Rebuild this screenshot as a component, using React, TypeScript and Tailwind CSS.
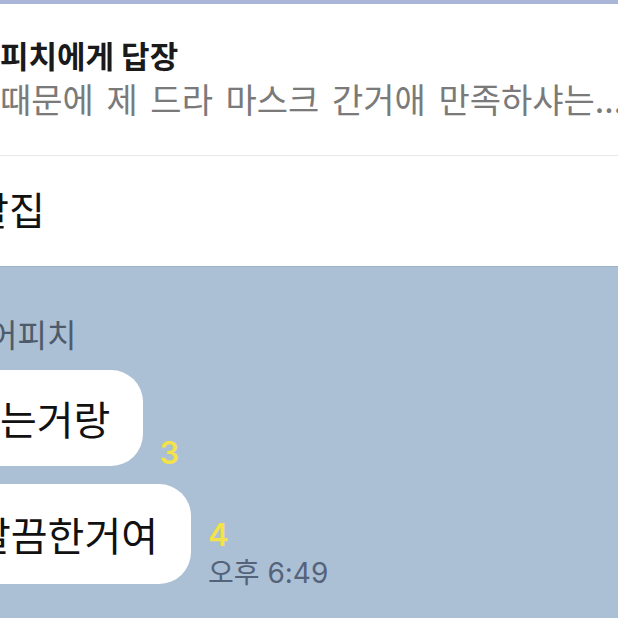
const KR = "font-['Noto_Sans_CJK_KR',sans-serif]";

function ReplyPreview() {
  return (
    <div className="h-[152px] bg-white border-b border-[#e8e8e8] pt-[33px]">
      <div className="text-[31px] leading-[36px] font-bold text-[#1a1a1a] whitespace-nowrap">
        피치에게 답장
      </div>
      <div className="mt-[6px] text-[34px] leading-[40px] text-[#7a7a7a] whitespace-nowrap [word-spacing:5px]">
        때문에 제 드라 마스크 간거애 만족하샤는...
      </div>
    </div>
  );
}

function InputRow() {
  return (
    <div className="h-[110px] bg-white pt-[28px]">
      <div className="-ml-[27px] text-[39px] leading-[48px] text-[#111] whitespace-nowrap">할집</div>
    </div>
  );
}

function Bubble({ text, pad }: { text: string; pad: string }) {
  return (
    <div className={`bg-white rounded-[32px] pr-[33px] -ml-[40px] ${pad}`}>
      <span className="text-[40px] leading-[46px] text-[#111] whitespace-nowrap">{text}</span>
    </div>
  );
}

export default function App() {
  return (
    <div className={`w-[618px] h-[618px] overflow-hidden bg-[#abbfd5] ${KR}`}>
      <div className="h-[4px] bg-[#aab6d8]" />
      <ReplyPreview />
      <InputRow />

      <div className="border-t border-[#9fb3c8] pt-[47px]">
        <div className="-ml-[12px] text-[32px] leading-[38px] text-[#4e5b6a] whitespace-nowrap">어피치</div>

        <div className="mt-[18px] flex items-end">
          <Bubble text="는거랑" pad="pl-[40px] py-[25px]" />
          <span className="ml-[16px] -mb-[1px] font-['Inter',sans-serif] text-[31px] leading-[28px] font-semibold text-[#f3e24a]">3</span>
        </div>

        <div className="mt-[18px] flex items-end">
          <Bubble text="깔끔한거여" pad="pl-[14px] py-[27px]" />
          <div className="ml-[17px] -mb-[3px] flex flex-col">
            <span className="font-['Inter',sans-serif] text-[31px] leading-[28px] font-semibold text-[#f3e24a]">4</span>
            <span className="mt-[10px] font-['Inter','Noto_Sans_CJK_KR',sans-serif] text-[28px] leading-[28px] text-[#55637a] whitespace-nowrap">
              오후 6:49
            </span>
          </div>
        </div>
      </div>
    </div>
  );
}
